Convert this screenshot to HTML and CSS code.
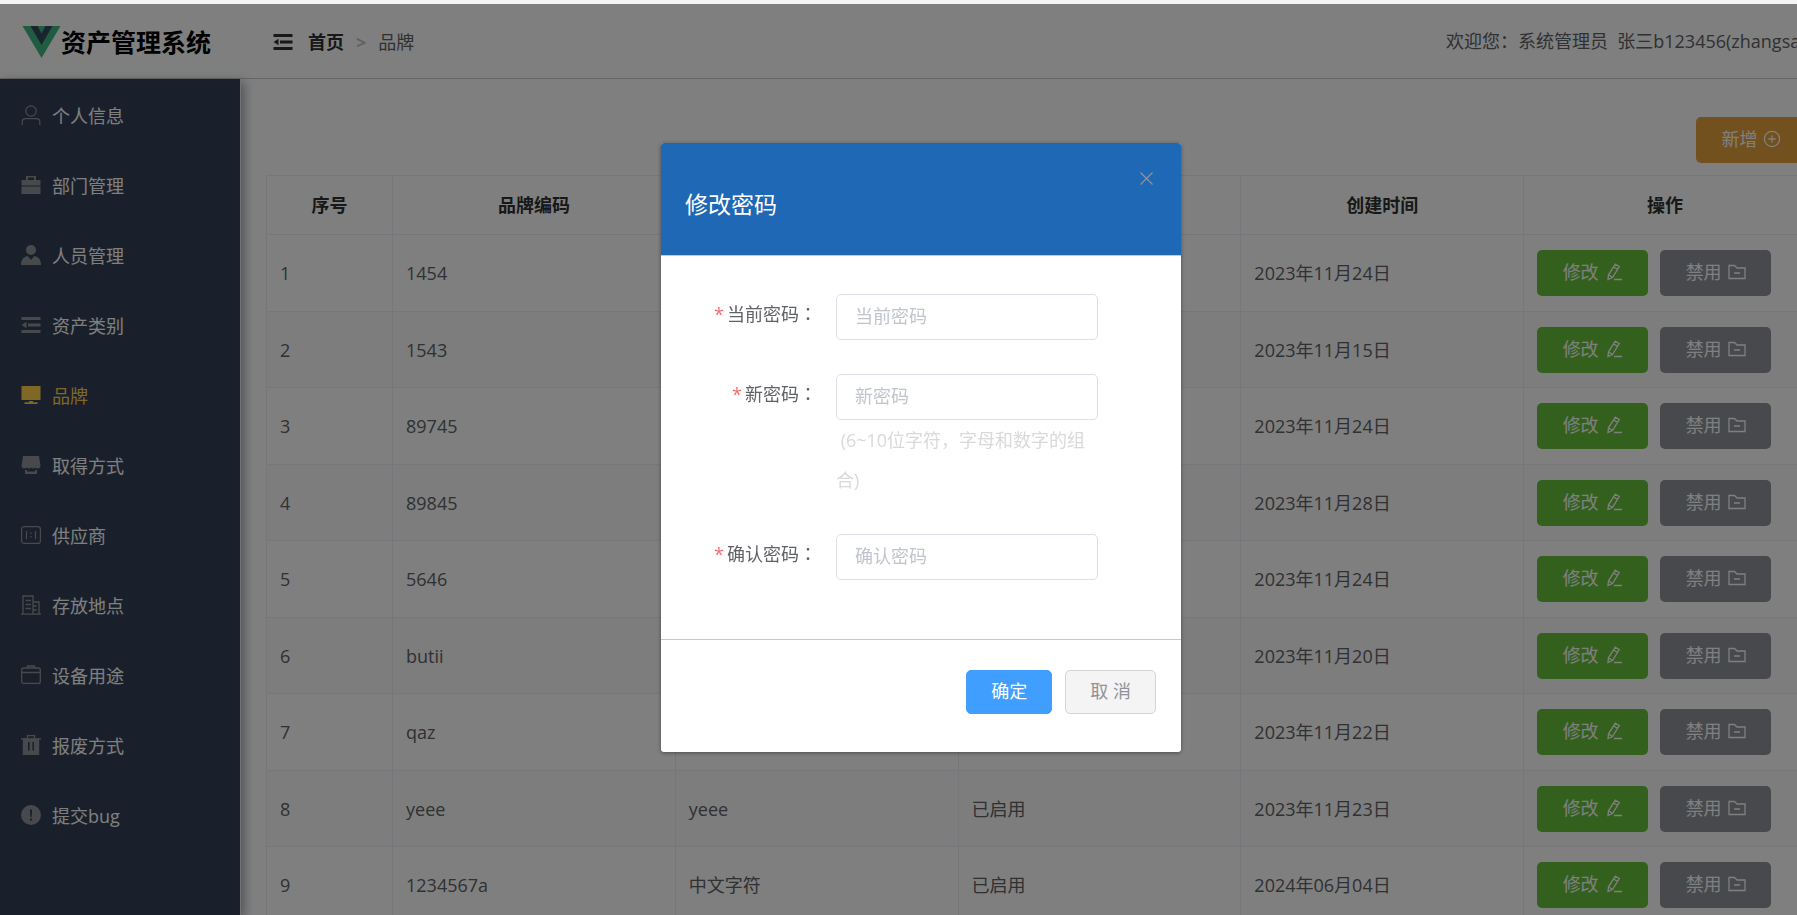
FILE: index.html
```html
<!DOCTYPE html>
<html lang="zh-CN">
<head>
<meta charset="utf-8">
<title>资产管理系统</title>
<link rel="stylesheet" href="styles.css">
</head>
<body>
<svg class="sprite" aria-hidden="true">
  <symbol id="i-user" viewBox="0 0 20 20"><g fill="none" stroke="currentColor" stroke-width="1.2"><circle cx="10" cy="6" r="5.2"/><path d="M1.2 20v-3c0-2 1.200-3.400 3.400-3.400h10.800c2.200 0 3.400 1.400 3.400 3.400v3"/></g></symbol>
  <symbol id="i-case" viewBox="0 0 20 20"><path fill="currentColor" d="M5 5V1h10v4h4.500v5.500H.5V5zM7 2.500V5h6V2.500zM.5 11.500h19V19H.5z"/></symbol>
  <symbol id="i-person" viewBox="0 0 20 20"><circle cx="10" cy="5" r="5" fill="currentColor"/><path fill="currentColor" d="M0 20c0-5 2-8 6.500-9L10 15l3.500-4c4.500 1 6.500 4 6.500 9z"/></symbol>
  <symbol id="i-fold" viewBox="0 0 20 20"><path fill="currentColor" d="M.5 2h19v3H.5zM7 8.500h12.500v3H7zM.5 15h19v3H.5zM5.500 6.800v6.400L.5 10z"/></symbol>
  <symbol id="i-monitor" viewBox="0 0 20 20"><path fill="currentColor" d="M.5 1h19v14H.5zM8 16h4v1.200h4.500V19h-13v-1.800H8z"/></symbol>
  <symbol id="i-shop" viewBox="0 0 20 20"><path fill="currentColor" d="M2 1h16l1.500 10c-.3 1.700-1.500 2.500-3 2.500-1 0-1.700-.3-2.200-1-.5.700-1.200 1-2.100 1s-1.700-.3-2.200-1c-.5.700-1.300 1-2.200 1s-1.600-.3-2.100-1c-.5.700-1.200 1-2.200 1-1.500 0-2.700-.8-3-2.500zM4 15h2v1.500h8V15h2v4H4z"/></symbol>
  <symbol id="i-ratio" viewBox="0 0 20 20"><rect x=".6" y="1.600" width="18.800" height="16.800" rx="2.500" fill="none" stroke="currentColor" stroke-width="1.200"/><path stroke="currentColor" stroke-width="1.200" d="M5.500 6v8M14.500 6v8M10 7.500v1.500M10 11v1.500"/></symbol>
  <symbol id="i-office" viewBox="0 0 20 20"><path fill="none" stroke="currentColor" stroke-width="1.300" d="M0 19.200h20M2 19V1h10v18M12 7h6v12M4.500 5.500H10M4.500 9.500H10M4.500 13.500H10M12 11h3.500M12 15h3.500"/></symbol>
  <symbol id="i-suitcase" viewBox="0 0 20 20"><g fill="none" stroke="currentColor" stroke-width="1.300"><rect x=".7" y="3" width="18.600" height="15.400" rx="2"/><path d="M.6 7.500h18.800M6.500 3V1h7v2"/></g></symbol>
  <symbol id="i-trash" viewBox="0 0 20 20"><path fill="none" stroke="currentColor" stroke-width="1.300" d="M0 3.800h20M6.500 3.500V.7h7v2.800"/><path fill="currentColor" fill-rule="evenodd" d="M1.800 3.500h16.400V20H1.800zM7 7v8.500h1.600V7zM11.400 7v8.500H13V7z"/></symbol>
  <symbol id="i-warn" viewBox="0 0 20 20"><path fill="currentColor" fill-rule="evenodd" d="M10 0a10 10 0 1 0 0 20 10 10 0 0 0 0-20zM8.900 4.500h2.200l-.4 7.500H9.300zM10 13.300a1.200 1.200 0 1 1 0 2.400 1.200 1.200 0 0 1 0-2.400z"/></symbol>
  <symbol id="i-plus" viewBox="0 0 18 18"><g fill="none" stroke="currentColor" stroke-width="1.300"><circle cx="9" cy="9" r="7.600"/><path d="M9 5.300v7.400M5.300 9h7.400"/></g></symbol>
  <symbol id="i-edit" viewBox="0 0 18 18"><path fill="none" stroke="currentColor" stroke-width="1.300" d="M10.300 1.200l4 2.300-6.800 11-4.500 2 .5-4.700zM8.600 4l4 2.400M3.500 12l3.800 2.300M9 16.500h8"/></symbol>
  <symbol id="i-folder" viewBox="0 0 18 18"><path fill="none" stroke="currentColor" stroke-width="1.300" d="M1 2.500h5.500L9 5h8v10.500H1zM6 10h6"/></symbol>
</svg>

<div class="strip"></div>
<div class="app">
  <header class="topbar">
    <div class="brand">
      <svg class="logo" viewBox="0 0 38 32"><path fill="#41b883" d="M0 0h38L19 32z"/><path fill="#35495e" d="M8 0h7l4 7.500L23 0h7L19 19z"/></svg>
      <span>资产管理系统</span>
    </div>
    <button class="fold" type="button" aria-label="折叠菜单"><svg class="icon"><use href="#i-fold"/></svg></button>
    <nav class="crumbs"><a class="crumb-home" href="#">首页</a><span class="crumb-sep">&gt;</span><span>品牌</span></nav>
    <div class="welcome">欢迎您：系统管理员&nbsp; 张三b123456(zhangsa</div>
  </header>
  <div class="body">
    <nav class="menu">
      <a class="item" href="#"><svg class="icon"><use href="#i-user"/></svg>个人信息</a>
      <a class="item" href="#"><svg class="icon"><use href="#i-case"/></svg>部门管理</a>
      <a class="item" href="#"><svg class="icon"><use href="#i-person"/></svg>人员管理</a>
      <a class="item" href="#"><svg class="icon"><use href="#i-fold"/></svg>资产类别</a>
      <a class="item active" href="#"><svg class="icon"><use href="#i-monitor"/></svg>品牌</a>
      <a class="item" href="#"><svg class="icon"><use href="#i-shop"/></svg>取得方式</a>
      <a class="item" href="#"><svg class="icon"><use href="#i-ratio"/></svg>供应商</a>
      <a class="item" href="#"><svg class="icon"><use href="#i-office"/></svg>存放地点</a>
      <a class="item" href="#"><svg class="icon"><use href="#i-suitcase"/></svg>设备用途</a>
      <a class="item" href="#"><svg class="icon"><use href="#i-trash"/></svg>报废方式</a>
      <a class="item" href="#"><svg class="icon"><use href="#i-warn"/></svg>提交bug</a>
    </nav>
    <main class="main">
      <div class="toolbar"><button class="btn add" type="button">新增<svg><use href="#i-plus"/></svg></button></div>
      <table class="grid">
        <thead><tr><th class="no">序号</th><th>品牌编码</th><th></th><th></th><th>创建时间</th><th>操作</th></tr></thead>
        <tbody>
          <tr><td>1</td><td>1454</td><td></td><td></td><td>2023年11月24日</td><td><div class="ops"><button class="btn edit" type="button">修改<svg><use href="#i-edit"/></svg></button><button class="btn ban" type="button">禁用<svg><use href="#i-folder"/></svg></button></div></td></tr>
          <tr><td>2</td><td>1543</td><td></td><td></td><td>2023年11月15日</td><td><div class="ops"><button class="btn edit" type="button">修改<svg><use href="#i-edit"/></svg></button><button class="btn ban" type="button">禁用<svg><use href="#i-folder"/></svg></button></div></td></tr>
          <tr><td>3</td><td>89745</td><td></td><td></td><td>2023年11月24日</td><td><div class="ops"><button class="btn edit" type="button">修改<svg><use href="#i-edit"/></svg></button><button class="btn ban" type="button">禁用<svg><use href="#i-folder"/></svg></button></div></td></tr>
          <tr><td>4</td><td>89845</td><td></td><td></td><td>2023年11月28日</td><td><div class="ops"><button class="btn edit" type="button">修改<svg><use href="#i-edit"/></svg></button><button class="btn ban" type="button">禁用<svg><use href="#i-folder"/></svg></button></div></td></tr>
          <tr><td>5</td><td>5646</td><td></td><td></td><td>2023年11月24日</td><td><div class="ops"><button class="btn edit" type="button">修改<svg><use href="#i-edit"/></svg></button><button class="btn ban" type="button">禁用<svg><use href="#i-folder"/></svg></button></div></td></tr>
          <tr><td>6</td><td>butii</td><td></td><td></td><td>2023年11月20日</td><td><div class="ops"><button class="btn edit" type="button">修改<svg><use href="#i-edit"/></svg></button><button class="btn ban" type="button">禁用<svg><use href="#i-folder"/></svg></button></div></td></tr>
          <tr><td>7</td><td>qaz</td><td></td><td></td><td>2023年11月22日</td><td><div class="ops"><button class="btn edit" type="button">修改<svg><use href="#i-edit"/></svg></button><button class="btn ban" type="button">禁用<svg><use href="#i-folder"/></svg></button></div></td></tr>
          <tr><td>8</td><td>yeee</td><td>yeee</td><td>已启用</td><td>2023年11月23日</td><td><div class="ops"><button class="btn edit" type="button">修改<svg><use href="#i-edit"/></svg></button><button class="btn ban" type="button">禁用<svg><use href="#i-folder"/></svg></button></div></td></tr>
          <tr><td>9</td><td>1234567a</td><td>中文字符</td><td>已启用</td><td>2024年06月04日</td><td><div class="ops"><button class="btn edit" type="button">修改<svg><use href="#i-edit"/></svg></button><button class="btn ban" type="button">禁用<svg><use href="#i-folder"/></svg></button></div></td></tr>
        </tbody>
      </table>
    </main>
  </div>
</div>

<div class="overlay">
  <form class="dialog" role="dialog" aria-labelledby="dlg-title">
    <div class="dialog-head">
      <h2 id="dlg-title">修改密码</h2>
      <button class="close" type="button" aria-label="关闭"><svg viewBox="0 0 13 13"><path fill="none" stroke="currentColor" stroke-width="1.200" d="M.5.5l12 12M12.500.5l-12 12"/></svg></button>
    </div>
    <div class="dialog-body">
      <div class="field"><label for="cur">当前密码<span class="colon" lang="zh-TW">：</span></label><div class="control"><input id="cur" type="password" placeholder="当前密码"></div></div>
      <div class="field"><label for="new">新密码<span class="colon" lang="zh-TW">：</span></label><div class="control"><input id="new" type="password" placeholder="新密码"><p class="hint">&nbsp;(6~10位字符，字母和数字的组合)</p></div></div>
      <div class="field"><label for="again">确认密码<span class="colon" lang="zh-TW">：</span></label><div class="control"><input id="again" type="password" placeholder="确认密码"></div></div>
    </div>
    <div class="dialog-foot">
      <button class="ok" type="button">确定</button>
      <button class="cancel" type="button">取 消</button>
    </div>
  </form>
</div>
</body>
</html>
```

FILE: styles.css
```css
* { box-sizing: border-box; }

html, body { height: 100%; }

body {
  margin: 0;
  overflow: hidden;
  background: #fff;
  color: #606266;
  font: 18px/24px "Open Sans", "Noto Sans CJK SC", sans-serif;
}

button, input { font: inherit; }
a { color: inherit; text-decoration: none; }

.sprite { position: absolute; width: 0; height: 0; }
.strip { height: 4px; background: #f4f4f4; }

/* The page is a little wider than the window and runs off its right edge. */
.app {
  display: flex;
  flex-direction: column;
  width: 102.5vw;
  height: calc(100% - 4px);
}

.topbar {
  display: flex;
  flex: none;
  align-items: center;
  height: 75px;
  padding: 2px 22px 0;
  border-bottom: 1px solid #ccc;
}
.brand {
  display: flex;
  align-items: center;
  width: 251px;
  color: #000;
  font-size: 25px;
  font-weight: 700;
}
.logo { width: 39px; height: 32px; }
.fold {
  display: flex;
  margin-right: 15px;
  padding: 0;
  border: 0;
  background: none;
  color: #303133;
}
.icon { flex: none; width: 20px; height: 20px; }
.crumbs { display: flex; }
.crumb-home { color: #303133; font-weight: 700; }
.crumb-sep { margin: 0 12px; color: #c0c4cc; font-weight: 700; }
.welcome {
  flex: none;
  width: 374px;
  margin-left: auto;
  padding-bottom: 2px;
  white-space: nowrap;
}

.body { display: flex; flex: 1; min-height: 0; }

.menu {
  flex: none;
  width: 241px;
  padding-top: 3px;
  border-right: 1px solid #e6e6e6;
  background: #324157;
  box-shadow: 3px 3px 10px rgba(50, 65, 87, .5);
}
.item {
  display: flex;
  align-items: center;
  gap: 11px;
  height: 70px;
  padding: 0 0 2px 21px;
  color: #fff;
}
.item .icon { margin-bottom: 2px; color: #909399; }
.item.active, .item.active .icon { color: #ffd04b; }

.main { flex: 1; padding: 38px 35px 0 25px; }
.toolbar { display: flex; justify-content: flex-end; margin-bottom: 12px; }

.btn {
  display: flex;
  align-items: center;
  justify-content: center;
  gap: 6px;
  width: 111px;
  height: 46px;
  padding: 0 0 2px;
  border: 0;
  border-radius: 5px;
  color: #fff;
}
.btn svg { width: 18px; height: 18px; }
.add { background: #e6a23c; }
.edit { background: #67c23a; }
.ban { background: #909399; }

.grid {
  width: 100%;
  table-layout: fixed;
  border: solid #ebeef5;
  border-width: 1px 0 0 1px;
  border-spacing: 0;
}
.grid th, .grid td {
  padding: 0 12px;
  border: solid #ebeef5;
  border-width: 0 1px 1px 0;
}
.grid th { height: 59px; color: #303133; font-weight: 700; }
.grid .no { width: 126px; }
.grid td { height: 77px; padding-left: 13px; }
.grid tr:nth-child(even) td { height: 76px; background: #fafafa; }
.ops { display: flex; gap: 12px; }

.overlay {
  position: fixed;
  top: 4px;
  bottom: 0;
  left: 0;
  width: 102.5vw;
  padding-top: 139px;
  background: rgba(0, 0, 0, .5);
}
.dialog {
  width: 520px;
  margin: 0 auto;
  overflow: hidden;
  border-radius: 3px;
  background: #fff;
  box-shadow: 0 1px 4px rgba(0, 0, 0, .4);
}
.dialog-head {
  display: flex;
  justify-content: space-between;
  height: 113px;
  padding: 29px 28px 0 24px;
  border-bottom: 1px solid #c8c9cc;
  background: #1f68b5;
}
.dialog-head h2 {
  margin: 16px 0 0;
  color: #fff;
  font-size: 23px;
  font-weight: 400;
  line-height: 32px;
}
.close {
  display: flex;
  align-self: flex-start;
  padding: 0;
  border: 0;
  background: none;
  color: #909399;
}
.close svg { width: 13px; height: 13px; }

.dialog-body {
  display: flex;
  flex-direction: column;
  gap: 34px;
  padding: 38px 83px 59px 38px;
}
.field { display: flex; gap: 19px; }
.field label { flex: none; width: 118px; line-height: 38px; text-align: right; white-space: nowrap; }
.field label::before { content: "*"; margin-right: 3px; color: #f56c6c; }
.colon { font-family: "Noto Sans CJK TC", sans-serif; }
.control { flex: 1; }
.control input {
  display: block;
  width: 100%;
  height: 46px;
  padding: 0 18px 3px;
  border: 1px solid #dcdfe6;
  border-radius: 5px;
  background: #fff;
  color: #606266;
}
.control input::placeholder { color: #c0c4cc; opacity: 1; }
.hint { margin: 0; color: #d9d9d9; line-height: 40px; }

.dialog-foot {
  display: flex;
  justify-content: flex-end;
  gap: 13px;
  padding: 30px 25px 38px;
  border-top: 1px solid #c8c9cc;
}
.ok, .cancel { height: 44px; padding: 0 24px 2px; border: 1px solid #409eff; border-radius: 5px; }
.ok { background: #409eff; color: #fff; }
.cancel { border-color: #d3d4d6; background: #f4f4f5; color: #909399; }
```
